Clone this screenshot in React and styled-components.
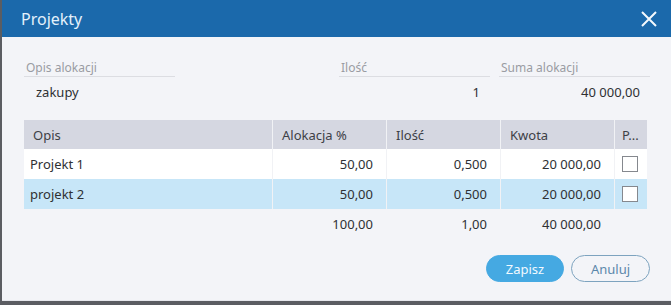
import React from "react";
import styled, { createGlobalStyle } from "styled-components";

const Global = createGlobalStyle`
  html, body { margin: 0; padding: 0; background: #5b5d62; }
  body { font-family: "Noto Sans", "Open Sans", sans-serif; }
`;

const Dialog = styled.div`
  margin-left: 2px;
  width: 669px;
  height: 300px;
  background: #f3f4f8;
  border-bottom: 1px solid #e6e7ec;
  display: flex;
  flex-direction: column;
`;

const Header = styled.div`
  height: 37px;
  background: #1b69ab;
  display: flex;
  align-items: center;
  justify-content: space-between;
  padding: 0 12px 0 19px;
  color: #e4f1fb;
  font-size: 16px;
`;

const Close = styled.button`
  border: 0;
  background: none;
  padding: 0;
  width: 20px;
  height: 20px;
  display: flex;
  cursor: pointer;
`;

const Body = styled.div`
  padding: 22px 21px 0 22px;
  display: flex;
  flex-direction: column;
`;

const Fields = styled.div`
  display: grid;
  grid-template-columns: 151px 164px 151px 9px 151px;
`;

const Field = styled.div`
  grid-column: ${(p) => p.$col};
  display: flex;
  flex-direction: column;
`;

const Label = styled.div`
  font-size: 12px;
  color: #9a9ca3;
  padding: 0 2px;
  height: 17px;
  line-height: 17px;
  border-bottom: 1px solid #dcdde2;
`;

const Value = styled.div`
  font-size: 13px;
  color: #2e3033;
  height: 30px;
  line-height: 30px;
  padding-left: ${(p) => (p.$right ? "0" : "12px")};
  padding-right: ${(p) => (p.$right ? "10px" : "0")};
  text-align: ${(p) => (p.$right ? "right" : "left")};
`;

const Table = styled.div`
  margin-top: 13px;
  width: 623px;
  display: grid;
  grid-template-columns: 249px 114px 114px 114px 32px;
  font-size: 13px;
  color: #2e3033;
`;

const Cell = styled.div`
  height: 30px;
  padding: ${(p) => (p.$last ? "0 0 0 7px" : p.$first ? "0 13px 0 6px" : "0 13px 0 9px")};
  background: ${(p) => p.$bg || "transparent"};
  border-right: 1px solid ${(p) => (p.$last || p.$plain ? "transparent" : "#f1f2f5")};
  white-space: nowrap;
  overflow: hidden;
  box-sizing: border-box;
  display: flex;
  align-items: center;
  justify-content: ${(p) => (p.$right ? "flex-end" : "flex-start")};
`;

const HeadCell = styled(Cell)`
  height: 29px;
  background: #d5d7e1;
  color: #3d4046;
  padding-left: ${(p) => (p.$last ? "7px" : "9px")};
`;

const Check = styled.span`
  flex: none;
  width: 14px;
  height: 14px;
  border: 1px solid #85888e;
  background: #fff;
`;

const Footer = styled.div`
  display: flex;
  justify-content: flex-end;
  gap: 7px;
  margin-top: 16px;
`;

const Btn = styled.button`
  height: 27px;
  width: ${(p) => p.$w}px;
  border-radius: 14px;
  font-family: inherit;
  font-size: 13px;
  border: 1px solid ${(p) => (p.$primary ? "#45a9e2" : "#7da3bf")};
  background: ${(p) => (p.$primary ? "#45a9e2" : "transparent")};
  color: ${(p) => (p.$primary ? "#f2f9ff" : "#5b87ab")};
  padding: 0;
`;

const rows = [
  { opis: "Projekt 1", alok: "50,00", ilosc: "0,500", kwota: "20 000,00", bg: "#ffffff" },
  { opis: "projekt 2", alok: "50,00", ilosc: "0,500", kwota: "20 000,00", bg: "#c7e6f8" },
];

export default function App() {
  return (
    <>
      <Global />
      <Dialog>
        <Header>
          <span>Projekty</span>
          <Close>
            <svg width="20" height="20" viewBox="0 0 20 20">
              <path d="M3 3 L17 17 M17 3 L3 17" stroke="#f4f9fd" strokeWidth="2" />
            </svg>
          </Close>
        </Header>
        <Body>
          <Fields>
            <Field $col={1}>
              <Label>Opis alokacji</Label>
              <Value>zakupy</Value>
            </Field>
            <Field $col={3}>
              <Label>Ilość</Label>
              <Value $right>1</Value>
            </Field>
            <Field $col={5}>
              <Label>Suma alokacji</Label>
              <Value $right>40 000,00</Value>
            </Field>
          </Fields>
          <Table>
            <HeadCell>Opis</HeadCell>
            <HeadCell>Alokacja %</HeadCell>
            <HeadCell>Ilość</HeadCell>
            <HeadCell>Kwota</HeadCell>
            <HeadCell $last>P...</HeadCell>
            {rows.map((r) => (
              <React.Fragment key={r.opis}>
                <Cell $bg={r.bg} $first>{r.opis}</Cell>
                <Cell $bg={r.bg} $right>{r.alok}</Cell>
                <Cell $bg={r.bg} $right>{r.ilosc}</Cell>
                <Cell $bg={r.bg} $right>{r.kwota}</Cell>
                <Cell $bg={r.bg} $last>
                  <Check />
                </Cell>
              </React.Fragment>
            ))}
            <Cell $plain />
            <Cell $plain $right>100,00</Cell>
            <Cell $plain $right>1,00</Cell>
            <Cell $plain $right>40 000,00</Cell>
            <Cell $last />
          </Table>
          <Footer>
            <Btn $primary $w={78}>Zapisz</Btn>
            <Btn $w={79}>Anuluj</Btn>
          </Footer>
        </Body>
      </Dialog>
    </>
  );
}
